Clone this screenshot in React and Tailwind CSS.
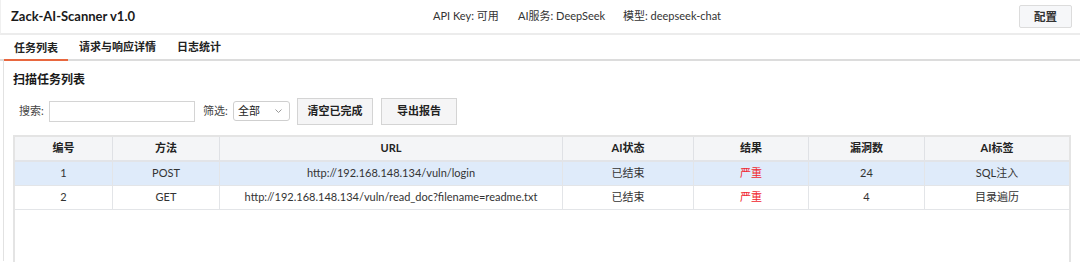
import React from "react";

const font = { fontFamily: 'Lato, "Noto Sans CJK SC", sans-serif' };

const cols = [
  { label: "编号", w: "w-[98px]" },
  { label: "方法", w: "w-[107px]" },
  { label: "URL", w: "w-[343px]" },
  { label: "AI状态", w: "w-[131px]" },
  { label: "结果", w: "w-[115px]" },
  { label: "漏洞数", w: "w-[116px]" },
  { label: "AI标签", w: "flex-1" },
];

const rows = [
  ["1", "POST", "http://192.168.148.134/vuln/login", "已结束", "严重", "24", "SQL注入"],
  ["2", "GET", "http://192.168.148.134/vuln/read_doc?filename=readme.txt", "已结束", "严重", "4", "目录遍历"],
];

export default function App() {
  return (
    <div className="w-[1080px] h-[262px] bg-white overflow-hidden text-[#222]" style={font}>
      {/* header */}
      <div className="h-[35px] flex items-center border-b-2 border-[#ececec] border-l border-l-[#f0f0f0] pl-[10px] pr-[8px]">
        <div className="w-[422px] text-[13px] font-bold text-[#1a1a1a]">Zack-AI-Scanner v1.0</div>
        <div className="flex-1 flex items-center text-[11px] text-[#333] whitespace-nowrap">
          <span className="w-[85px]">API Key: 可用</span>
          <span className="w-[105px]">AI服务: DeepSeek</span>
          <span>模型: deepseek-chat</span>
        </div>
        <button className="w-[53px] h-[23px] border border-[#dcdcdc] bg-[#f6f7f9] text-[11.5px] font-bold text-[#333] rounded-[2px]">
          配置
        </button>
      </div>
      {/* tabs */}
      <div className="h-[26px] flex items-end pl-[4px] border-b-2 border-[#dcdcdc]">
        <div className="w-[64px] h-[24px] flex items-center justify-center text-[11px] font-bold text-[#222] border-b-2 border-[#e8673f] -mb-[2px]">
          任务列表
        </div>
        <div className="h-[24px] flex items-center ml-[11px] text-[11px] font-bold text-[#222]">请求与响应详情</div>
        <div className="h-[24px] flex items-center ml-[21px] text-[11px] font-bold text-[#222]">日志统计</div>
      </div>
      {/* panel */}
      <div className="ml-[3px] border-l border-[#e2e2e2] h-[200px] pl-[9px] pr-[8px]">
        <div className="pt-[10px] text-[12px] font-bold text-[#1a1a1a] leading-[18px]">扫描任务列表</div>
        <div className="flex items-center mt-[8px] h-[28px] text-[11px] text-[#444]">
          <span className="ml-[6px] w-[30px]">搜索:</span>
          <div className="w-[146px] h-[21px] border border-[#d4d4d4] bg-white" />
          <span className="ml-[8px] w-[30px]">筛选:</span>
          <div className="w-[57px] h-[20px] border border-[#cfcfcf] rounded-[3px] flex items-center justify-between px-[4px] bg-white text-[#222]">
            <span>全部</span>
            <svg width="7" height="4" viewBox="0 0 7 4" className="mr-[3px]">
              <path d="M0.5 0.5 L3.5 3.5 L6.5 0.5" fill="none" stroke="#999" strokeWidth="1" />
            </svg>
          </div>
          <button className="ml-[7px] w-[76px] h-[27px] border border-[#d4d4d4] bg-[#f5f5f6] text-[11px] font-bold text-[#222]">
            清空已完成
          </button>
          <button className="ml-[8px] w-[76px] h-[27px] border border-[#d4d4d4] bg-[#f5f5f6] text-[11px] font-bold text-[#222]">
            导出报告
          </button>
        </div>
        {/* table */}
        <div className="mt-[10px] w-[1058px] h-[140px] border-2 border-[#e4e4e4] bg-white text-[11px]">
          <div className="flex h-[25px] bg-[#f4f5f7] border-b-2 border-[#e2e4e8]">
            {cols.map((c, i) => (
              <div
                key={c.label}
                className={`${c.w} flex items-center justify-center font-bold text-[#222] ${i < cols.length - 1 ? "border-r border-[#dfe1e5]" : ""}`}
              >
                {c.label}
              </div>
            ))}
          </div>
          {rows.map((r, ri) => (
            <div
              key={ri}
              className={`flex h-[24px] border-b border-[#e3e5e8] ${ri === 0 ? "bg-[#dfebfa]" : "bg-white"}`}
            >
              {r.map((v, i) => (
                <div
                  key={i}
                  className={`${cols[i].w} flex items-center justify-center ${i === 4 ? "text-[#f0262e]" : "text-[#333]"} ${i < cols.length - 1 ? "border-r border-[#e3e5e8]" : ""}`}
                >
                  {v}
                </div>
              ))}
            </div>
          ))}
        </div>
      </div>
    </div>
  );
}
